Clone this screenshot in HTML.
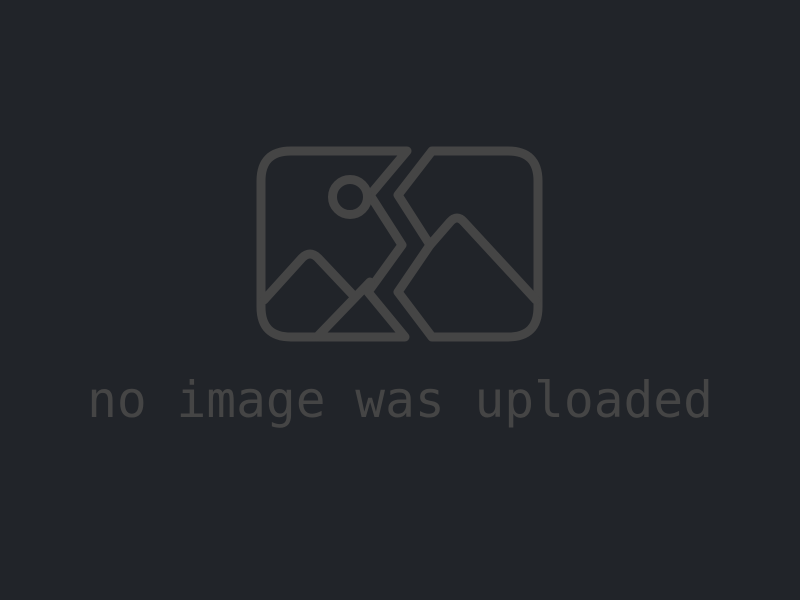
<!DOCTYPE html>
<html><head><meta charset="utf-8"><style>
html,body{margin:0;padding:0;background:#212429;width:800px;height:600px;overflow:hidden}
svg{position:absolute;left:0;top:0}
.t{position:absolute;left:0;width:800px;top:370px;text-align:center;font-family:"DejaVu Sans Mono","Liberation Mono",monospace;font-size:49.5px;color:#454545;line-height:60px;white-space:nowrap}
</style></head><body>
<svg width="800" height="600" viewBox="0 0 800 600" fill="none" stroke="#454545" stroke-width="9" stroke-linejoin="round" stroke-linecap="round">
<path d="M407 151 L291 151 Q261 151 261 181 L261 307 Q261 337 291 337 L405 337 L368 292 L402 245 L370 195 Z"/>
<circle cx="350" cy="197" r="17.5"/>
<path d="M264 300 L302 258 Q310 250 318 258 L352 294"/>
<path d="M317 337 L370 282"/>
<path d="M432 151 L508 151 Q538 151 538 181 L538 307 Q538 337 508 337 L432 337 L398 292 L430 245 L398 195 Z"/>
<path d="M430 245 L450 222 Q457 214 464 222 L536 300"/>
</svg>
<div class="t">no image was uploaded</div>
</body></html>
